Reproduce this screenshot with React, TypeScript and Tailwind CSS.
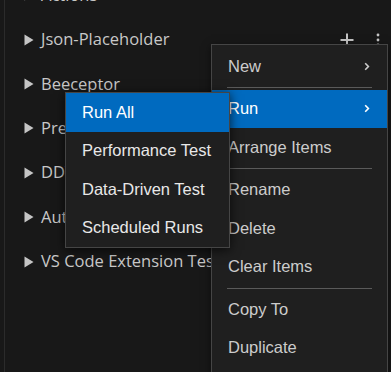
const treeItems = [
  'Actions',
  'Json-Placeholder',
  'Beeceptor',
  'Preview Collection',
  'DDT Samples',
  'Auth Examples',
  'VS Code Extension Tests',
];

type MenuEntry = { label: string; sub?: boolean; active?: boolean } | 'sep';

const mainMenu: MenuEntry[] = [
  { label: 'New', sub: true },
  'sep',
  { label: 'Run', sub: true, active: true },
  { label: 'Arrange Items' },
  'sep',
  { label: 'Rename' },
  { label: 'Delete' },
  { label: 'Clear Items' },
  'sep',
  { label: 'Copy To' },
  { label: 'Duplicate' },
];

const runMenu = ['Run All', 'Performance Test', 'Data-Driven Test', 'Scheduled Runs'];

function Chevron() {
  return (
    <svg width="6" height="9" viewBox="0 0 6 9" className="shrink-0">
      <path d="M1.2 1.2 L4.4 4.5 L1.2 7.8" fill="none" stroke="currentColor" strokeWidth="1.6" />
    </svg>
  );
}

export default function App() {
  return (
    <div className="relative w-[391px] h-[372px] overflow-hidden bg-[#181818] font-['Open_Sans',sans-serif]">
      <div className="absolute left-[4px] top-0 bottom-0 w-px bg-[#2b2b2b]" />

      {/* tree */}
      <div className="mt-[-27px]">
        {treeItems.map((name, i) => (
          <div key={name} className="h-[44.4px] flex items-center pl-[24px] pr-[10px]">
            <svg width="10" height="12" viewBox="0 0 10 12" className="shrink-0 text-[#c5c5c5]">
              <path d="M0.5 0.5 L9.5 6 L0.5 11.5 Z" fill="currentColor" />
            </svg>
            <span className="ml-[7px] text-[16.5px] text-[#c8c8c8] whitespace-nowrap">{name}</span>
            {i === 1 && (
              <div className="ml-auto flex items-center gap-[22px] text-[#c5c5c5] pr-[1px]">
                <svg width="14" height="14" viewBox="0 0 14 14">
                  <path d="M7 0.5 V13.5 M0.5 7 H13.5" stroke="currentColor" strokeWidth="2" />
                </svg>
                <svg width="4" height="14" viewBox="0 0 4 14">
                  <circle cx="2" cy="2" r="1.4" fill="currentColor" />
                  <circle cx="2" cy="7" r="1.4" fill="currentColor" />
                  <circle cx="2" cy="12" r="1.4" fill="currentColor" />
                </svg>
              </div>
            )}
          </div>
        ))}
      </div>

      {/* context menu */}
      <div className="absolute left-[211px] top-[44px] w-[177px] h-[360px] bg-[#1f1f1f] border border-[#454545] pt-[2px] shadow-[0_2px_8px_rgba(0,0,0,0.5)] font-['Liberation_Sans',Arial,sans-serif] text-[16.5px]">
        {mainMenu.map((m, i) =>
          m === 'sep' ? (
            <div key={i} className="h-[4px] flex items-center px-[15px]">
              <div className="h-px w-full bg-[#5a5a5a]" />
            </div>
          ) : (
            <div
              key={m.label}
              className={`h-[38.5px] flex items-center justify-between pl-[16px] pr-[17px] ${
                m.active ? 'bg-[#006abf] text-white' : 'text-[#cccccc]'
              }`}
            >
              <span>{m.label}</span>
              {m.sub && <Chevron />}
            </div>
          )
        )}
      </div>

      {/* run submenu */}
      <div className="absolute left-[65px] top-[92px] w-[165px] bg-[#1f1f1f] border border-[#454545] shadow-[0_2px_10px_rgba(0,0,0,0.7)] font-['Liberation_Sans',Arial,sans-serif] text-[16.5px]">
        {runMenu.map((label, i) => (
          <div
            key={label}
            className={`h-[38.5px] flex items-center pl-[16px] ${
              i === 0 ? 'bg-[#006abf] text-white' : 'text-[#e8e8e8]'
            }`}
          >
            {label}
          </div>
        ))}
      </div>
    </div>
  );
}
